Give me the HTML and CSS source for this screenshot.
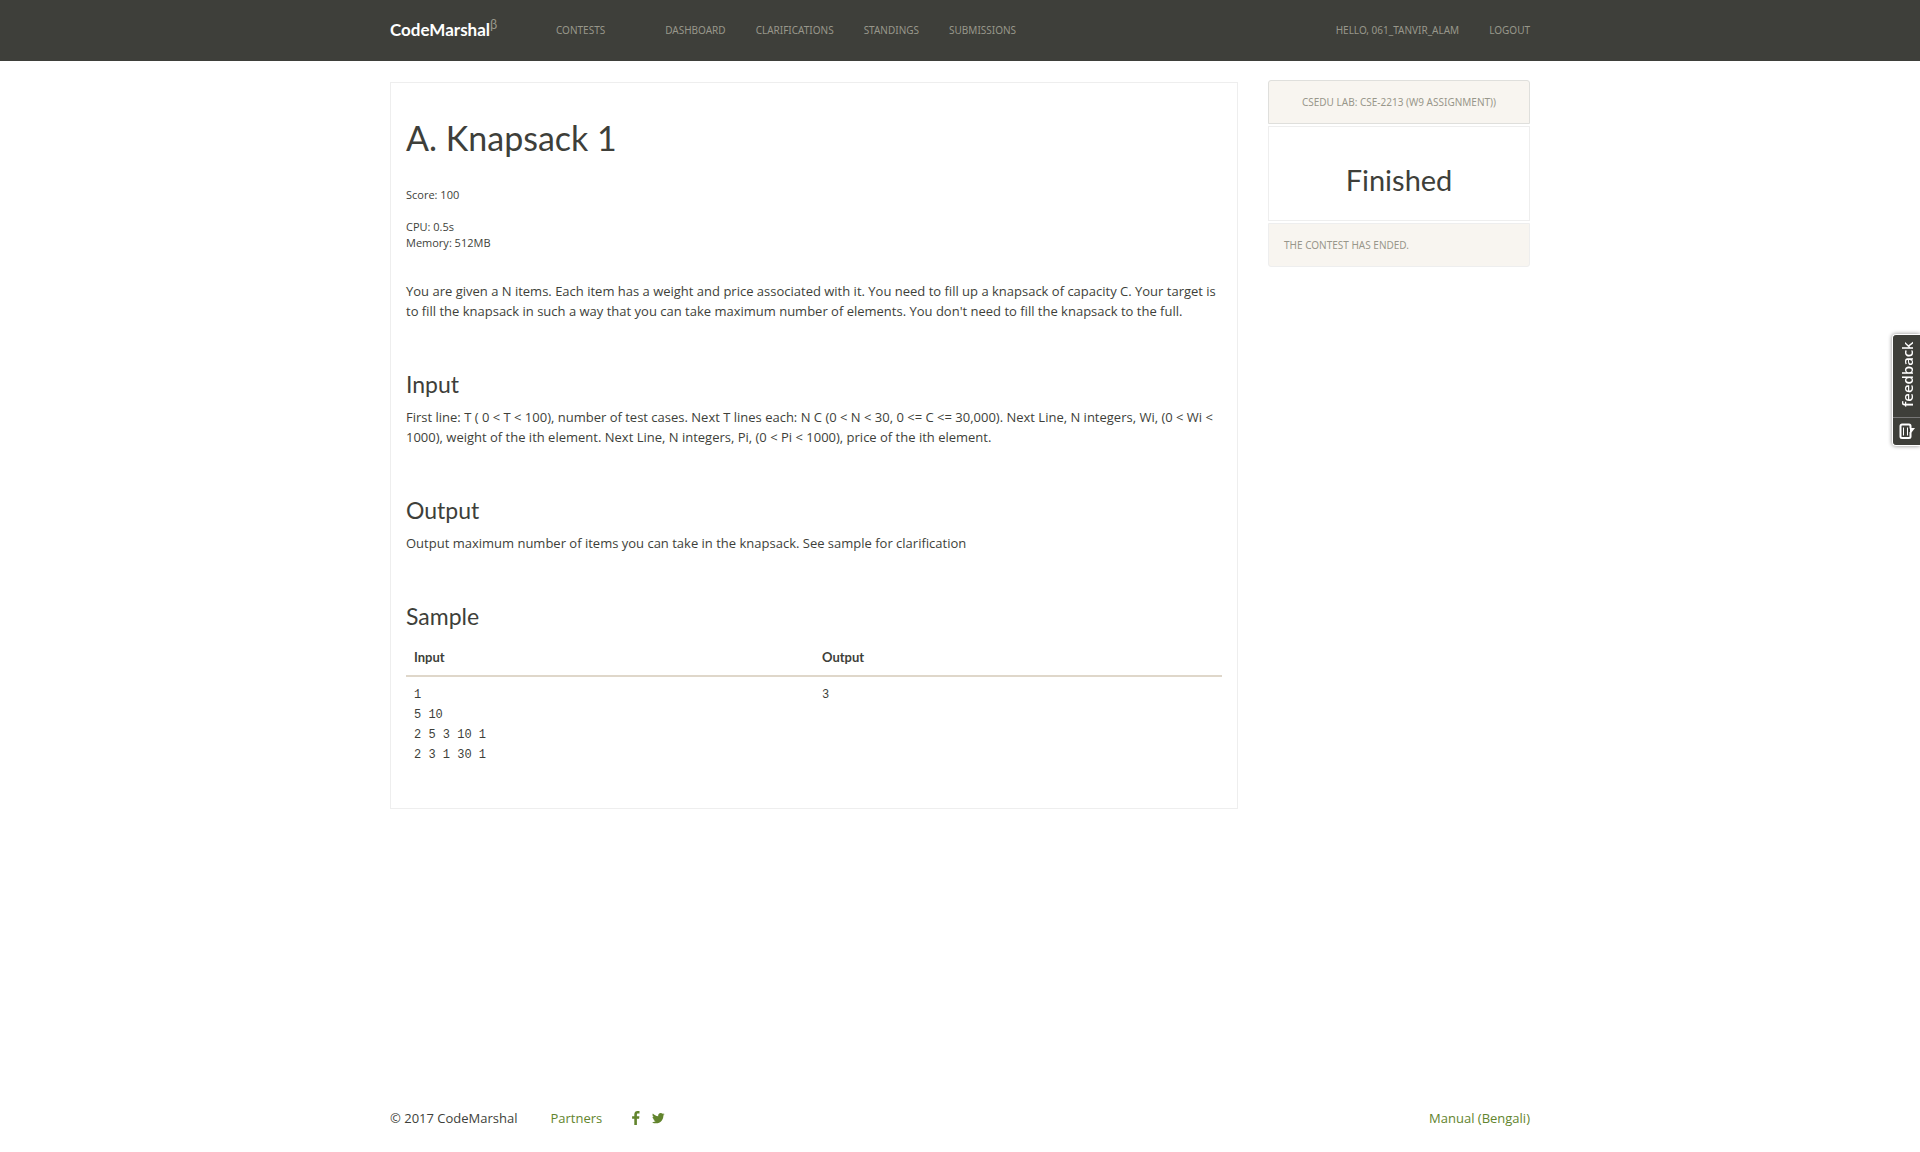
FILE: index.html
```html
<!DOCTYPE html>
<html lang="en">
<head>
<meta charset="utf-8">
<title>A. Knapsack 1 - CodeMarshal</title>
<link rel="stylesheet" href="styles.css">
</head>
<body>
<header class="navbar">
  <div class="container navbar-inner">
    <a class="brand" href="#">CodeMarshal<sup>β</sup></a>
    <nav class="nav nav-main">
      <a class="nav-contests" href="#">Contests</a>
      <a href="#">Dashboard</a>
      <a href="#">Clarifications</a>
      <a href="#">Standings</a>
      <a href="#">Submissions</a>
    </nav>
    <nav class="nav nav-user">
      <a href="#">Hello, 061_tanvir_alam</a>
      <a href="#">Logout</a>
    </nav>
  </div>
</header>

<div class="container content">
  <main class="problem">
    <h1>A. Knapsack 1</h1>
    <p class="meta">Score: 100</p>
    <p class="meta">CPU: 0.5s<br>Memory: 512MB</p>
    <p class="statement">You are given a N items. Each item has a weight and price associated with it. You need to fill up a knapsack of capacity C. Your target is to fill the knapsack in such a way that you can take maximum number of elements. You don't need to fill the knapsack to the full.</p>
    <h2>Input</h2>
    <p>First line: T ( 0 &lt; T &lt; 100), number of test cases. Next T lines each: N C (0 &lt; N &lt; 30, 0 &lt;= C &lt;= 30,000). Next Line, N integers, Wi, (0 &lt; Wi &lt; 1000), weight of the ith element. Next Line, N integers, Pi, (0 &lt; Pi &lt; 1000), price of the ith element.</p>
    <h2>Output</h2>
    <p>Output maximum number of items you can take in the knapsack. See sample for clarification</p>
    <h2>Sample</h2>
    <table class="sample">
      <thead>
        <tr><th scope="col">Input</th><th scope="col">Output</th></tr>
      </thead>
      <tbody>
        <tr>
          <td><pre>1
5 10
2 5 3 10 1
2 3 1 30 1</pre></td>
          <td><pre>3</pre></td>
        </tr>
      </tbody>
    </table>
  </main>

  <aside class="contest">
    <a class="contest-name" href="#">CSEDU Lab: CSE-2213 (W9 Assignment))</a>
    <div class="contest-status">Finished</div>
    <div class="contest-note">The contest has ended.</div>
  </aside>
</div>

<footer class="container footer">
  <span class="copyright">© 2017 CodeMarshal</span>
  <a class="partners" href="#">Partners</a>
  <a class="social" href="#" aria-label="Facebook">
    <svg width="8" height="14" viewBox="0 0 8 14"><path d="M7.5 0.1v2.3H6.2C5.1 2.4 4.9 2.9 4.9 3.6v1.6h2.5L7.1 7.7H4.9V14H2.3V7.7H0.1V5.2h2.2V3.3C2.3 1.2 3.600 0 5.500 0c0.900 0 1.700 0.050 2 0.100z"/></svg>
  </a>
  <a class="social" href="#" aria-label="Twitter">
    <svg width="13" height="11" viewBox="0 0 13 11"><path d="M12.600 1.300c-0.350 0.500-0.800 0.950-1.250 1.300v0.350c0 3.400-2.600 7.400-7.350 7.400-1.500 0-2.850-0.450-4-1.200 1.400 0.150 2.700-0.250 3.800-1.100-1.100 0-2.050-0.750-2.400-1.800 0.400 0.050 0.750 0.050 1.150-0.050C1.350 5.950 0.500 4.950 0.500 3.650c0.350 0.200 0.750 0.300 1.150 0.300C0.550 3.200 0.150 1.700 0.850 0.500 2.150 2.050 4 3.050 6.200 3.200 5.800 1.500 7.100 0 8.750 0c0.750 0 1.400 0.300 1.900 0.800 0.600-0.100 1.150-0.300 1.650-0.600-0.200 0.600-0.600 1.100-1.150 1.400 0.500-0.050 1-0.200 1.450-0.300z"/></svg>
  </a>
  <a class="manual" href="#">Manual (Bengali)</a>
</footer>

<button class="feedback" type="button">
  <span class="feedback-label">feedback</span>
  <span class="feedback-icon">
    <svg width="17" height="18" viewBox="0 0 17 18" fill="none" stroke="#fff"><path d="M3 1.500h7a1.500 1.500 0 0 1 1.500 1.500V5.500M11.500 9V13.500a1.500 1.500 0 0 1-1.500 1.500H3a1.500 1.500 0 0 1-1.500-1.500V3A1.500 1.500 0 0 1 3 1.500" stroke-width="2"/><path d="M11 5h5l-3.500 4.500H11z" fill="#fff" stroke="none"/><path d="M4.500 4.500v8M8.500 4.500v8" stroke-width="1"/></svg>
  </span>
</button>
</body>
</html>
```

FILE: styles.css
```css
* {
  box-sizing: border-box;
}

body {
  margin: 0;
  min-height: 100vh;
  display: flex;
  flex-direction: column;
  background: #fff;
  color: #3e3f3a;
  font-family: "Open Sans", "Noto Sans", sans-serif;
  font-size: 13px;
  line-height: 20px;
}

a {
  color: #62842d;
  text-decoration: none;
}

.container {
  width: 100%;
  max-width: 1170px;
  margin: 0 auto;
  padding: 0 15px;
}

.navbar {
  background: #3e3f3a;
}

.navbar-inner {
  display: flex;
  align-items: center;
  height: 61px;
  padding-bottom: 2px;
}

.brand {
  width: 136px;
  color: #fff;
  font-family: Lato, sans-serif;
  font-size: 17px;
  font-weight: 700;
}

.brand sup {
  color: #98978b;
  font-size: 13px;
  font-weight: 400;
  line-height: 0;
}

.nav {
  display: flex;
}

.nav a {
  padding: 0 15px;
  color: #98978b;
  font-family: "Noto Sans", sans-serif;
  font-size: 10px;
  text-transform: uppercase;
}

.nav-main {
  margin-left: 15px;
}

.nav .nav-contests {
  margin-right: 30px;
}

.nav-user {
  margin-left: auto;
  margin-right: -15px;
}

.content {
  display: flex;
  align-items: flex-start;
  gap: 30px;
}

.problem {
  flex: 1;
  min-width: 0;
  margin-top: 21px;
  padding: 35px 15px 15px;
  border: 1px solid #eee;
}

p {
  margin: 0;
}

h1,
h2,
.contest-status {
  font-family: Lato, sans-serif;
  font-weight: 400;
}

h1 {
  margin: 0 0 29px;
  font-size: 34px;
  line-height: 40px;
}

h2 {
  margin: 50px 0 10px;
  font-size: 23px;
  line-height: 26px;
}

.meta {
  margin-bottom: 16px;
  font-size: 11px;
  line-height: 16px;
}

.statement {
  margin-top: 30px;
}

.sample {
  width: 100%;
  margin-bottom: 20px;
  border-collapse: separate;
  border-spacing: 0;
  table-layout: fixed;
}

.sample th,
.sample td {
  padding: 8px;
  text-align: left;
  vertical-align: top;
}

.sample th {
  border-bottom: 2px solid #dfd7ca;
  font-family: Lato, sans-serif;
}

pre {
  margin: 0;
  font-family: "Liberation Mono", monospace;
  font-size: 12px;
}

.contest {
  display: flex;
  flex-direction: column;
  gap: 2px;
  width: 262px;
  margin-top: 19px;
}

.contest-name,
.contest-note {
  padding: 11px 15px;
  border: 1px solid #eee;
  background: #f8f5f0;
  color: #98978b;
  font-family: "Noto Sans", sans-serif;
  font-size: 10px;
  text-transform: uppercase;
}

.contest-name {
  border-color: #dfdfdc;
  border-radius: 3px 3px 0 0;
  text-align: center;
}

.contest-note {
  border-radius: 0 0 3px 3px;
}

.contest-status {
  padding: 36px 15px 24px;
  border: 1px solid #eee;
  font-size: 29px;
  line-height: 33px;
  text-align: center;
}

.footer {
  display: flex;
  align-items: center;
  margin-top: auto;
  padding-bottom: 24px;
}

.footer svg {
  display: block;
  fill: #62842d;
}

.partners {
  margin: 0 30px 0 33px;
}

.social {
  margin-right: 12px;
}

.manual {
  margin-left: auto;
}

.feedback {
  position: fixed;
  top: 334px;
  right: 0;
  display: flex;
  flex-direction: column;
  align-items: center;
  width: 28px;
  height: 112px;
  padding: 0;
  border: 1px solid #fff;
  border-right: 0;
  border-radius: 4px 0 0 4px;
  background: #3e3f3a;
  box-shadow: 0 0 4px #888;
  color: #fff;
  font-family: "Noto Sans", sans-serif;
  font-size: 15px;
  font-weight: 500;
  line-height: 24px;
}

.feedback-label {
  height: 82px;
  padding-top: 4px;
  writing-mode: vertical-rl;
  transform: rotate(180deg);
  text-align: center;
}

.feedback-icon {
  width: 100%;
  padding: 5px 0 0 6px;
  border-top: 1px solid #777;
}

.feedback-icon svg {
  display: block;
}
```
